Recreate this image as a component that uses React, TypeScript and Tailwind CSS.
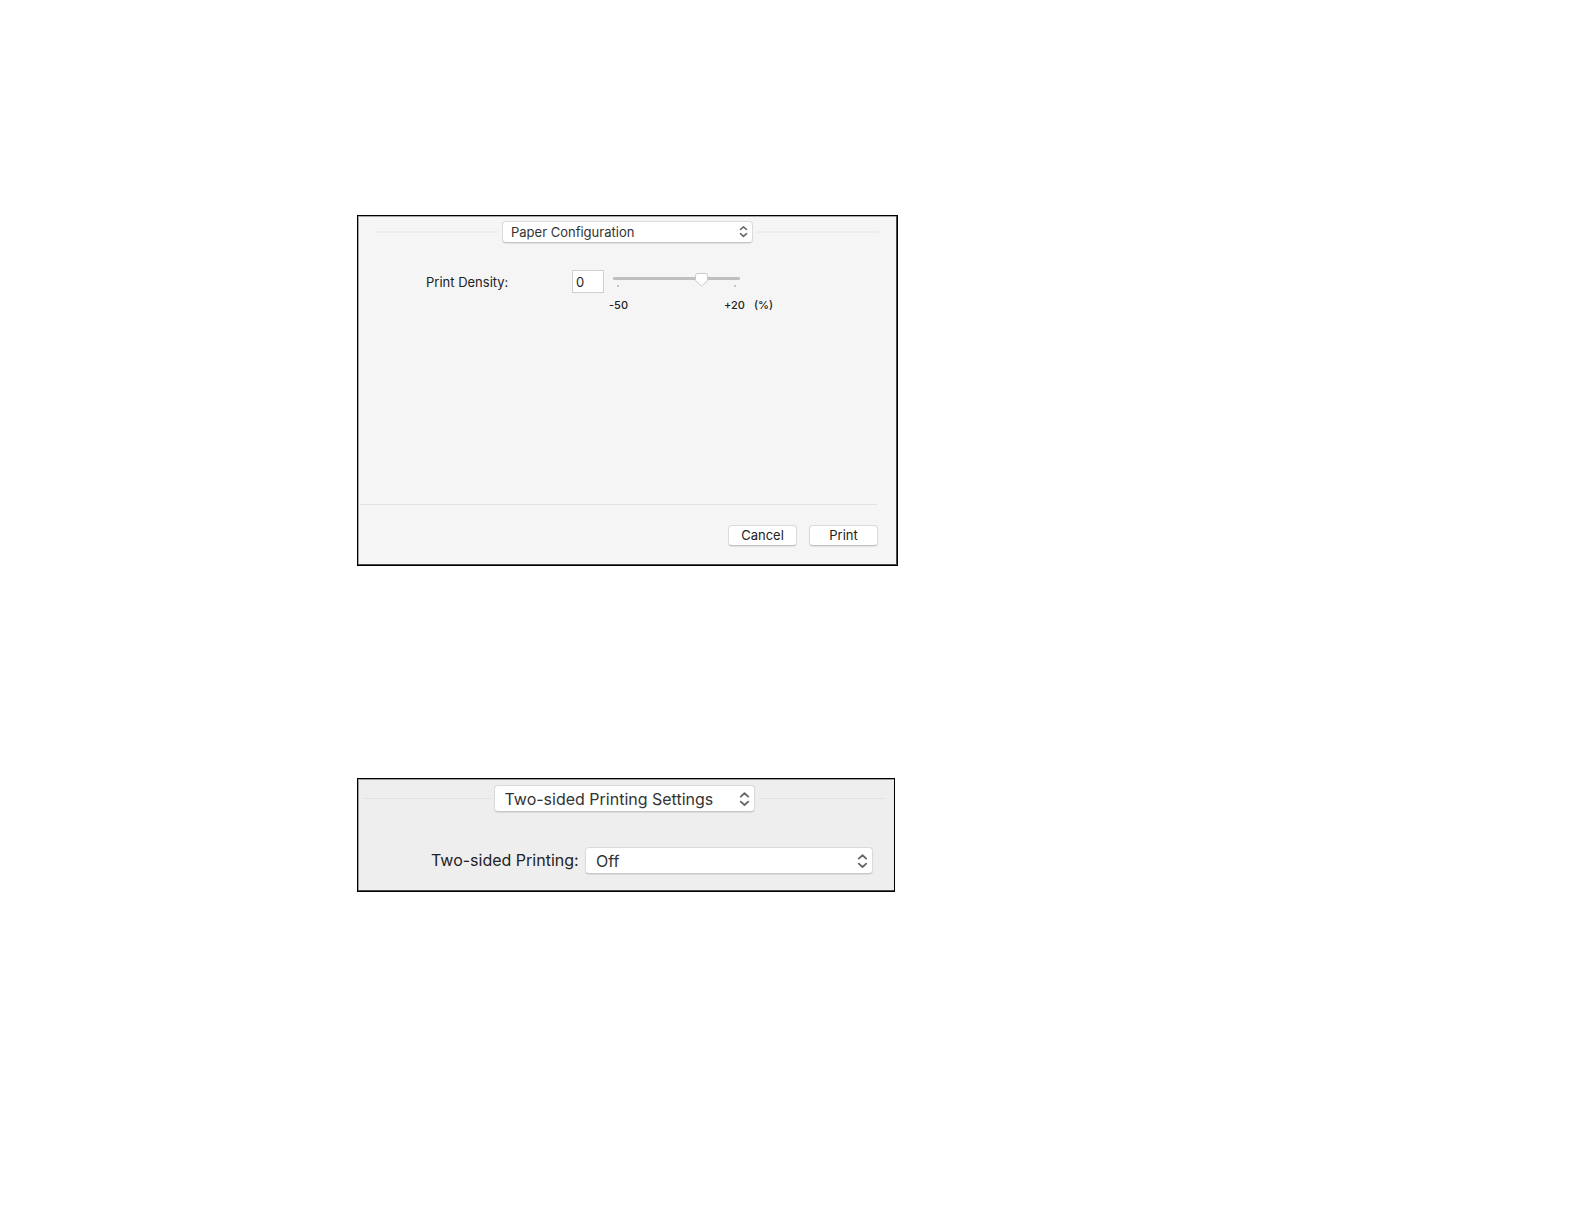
import { useState } from "react";
import type { ReactNode } from "react";

function Chevrons({ className }: { className: string }) {
  return (
    <svg
      viewBox="0 0 10 14"
      fill="none"
      stroke="#666666"
      strokeWidth="1.7"
      strokeLinecap="round"
      strokeLinejoin="round"
      className={`pointer-events-none absolute ${className}`}
      aria-hidden="true"
    >
      <path d="M1.6 4.8 5 1.8l3.4 3M1.6 9.4 5 12.4l3.4-3" />
    </svg>
  );
}

const popup =
  "w-full appearance-none rounded-[4px] border border-[#dadada] border-b-[#c6c6c6] bg-white text-[#333333] shadow-[0_1px_1px_rgba(0,0,0,0.08)] outline-none";

function Rule({ className }: { className: string }) {
  return <div className={`flex-1 ${className}`} />;
}

function PushButton({ children }: { children: ReactNode }) {
  return (
    <button
      type="button"
      className="h-[21px] w-[69px] rounded-[4px] border border-[#dadada] border-b-[#c2c2c2] bg-white text-[13px] leading-[19px] text-[#222222] shadow-[0_1px_1px_rgba(0,0,0,0.08)]"
    >
      {children}
    </button>
  );
}

function DensitySlider({ value, onChange }: { value: number; onChange: (v: number) => void }) {
  const x = 5 + ((value + 50) / 70) * 117;
  return (
    <div className="relative h-4 w-[128px]">
      <svg viewBox="0 0 128 16" className="block h-4 w-[128px]" aria-hidden="true">
        <rect x="0" y="4" width="127" height="3" rx="1" fill="#bfbfbf" />
        <rect x="4" y="12" width="2" height="2" fill="#c4c4c4" />
        <rect x="121" y="12" width="2" height="2" fill="#c4c4c4" />
        <path
          d={`M${x - 6} 2.5a2 2 0 0 1 2-2h8a2 2 0 0 1 2 2v5L${x} 13.2 ${x - 6} 7.5Z`}
          fill="#ffffff"
          stroke="#c8c8c8"
          strokeWidth="1"
        />
      </svg>
      <input
        type="range"
        min={-50}
        max={20}
        value={value}
        aria-label="Print Density"
        onChange={(e) => onChange(Number(e.target.value))}
        className="absolute inset-0 m-0 h-4 w-full cursor-default opacity-0"
      />
    </div>
  );
}

function PaperConfiguration() {
  const [density, setDensity] = useState(0);
  return (
    <section className="w-full max-w-[541px] border border-black bg-[#f5f5f5] shadow-[inset_-1px_-1px_0_#4a4a4a,inset_1px_1px_0_#a6a6a6]">
      <div className="flex items-center pt-[5px] pr-[18px] pl-[18px]">
        <Rule className="mr-1 h-[2px] bg-[#ececec]" />
        <div className="relative w-[251px]">
          <select
            aria-label="Options pane"
            className={`${popup} block h-[22px] pr-6 pl-2 text-[13px] leading-5`}
          >
            <option>Paper Configuration</option>
          </select>
          <Chevrons className="top-1 right-[5px] h-[13px] w-[9px]" />
        </div>
        <Rule className="ml-1 h-[2px] bg-[#ececec]" />
      </div>

      <div className="mt-[27px] flex pl-[68px]">
        <label htmlFor="density" className="w-[146px] pt-[2px] text-[13px] leading-5 text-[#222222]">
          Print Density:
        </label>
        <input
          id="density"
          type="text"
          value={density}
          onChange={(e) => setDensity(Number(e.target.value) || 0)}
          className="h-[23px] w-8 border border-[#cfcfcf] bg-white pl-[3px] text-[13px] text-[#222222] outline-none"
        />
        <div className="ml-[9px] pt-[3px]">
          <DensitySlider value={density} onChange={setDensity} />
          <div className="mt-2 -ml-1 flex text-[11px] leading-4 font-medium text-[#222222]">
            <span className="w-[115px]">-50</span>
            <span className="w-[30px]">+20</span>
            <span>(%)</span>
          </div>
        </div>
      </div>

      <div className="mt-[191px] mr-[20px] ml-[2px] h-px bg-[#e3e3e3]" />
      <div className="flex justify-end gap-3 pt-5 pr-[19px] pb-[19px]">
        <PushButton>Cancel</PushButton>
        <PushButton>Print</PushButton>
      </div>
    </section>
  );
}

function TwoSidedPrinting() {
  return (
    <section className="w-full max-w-[538px] border border-black bg-[#eeeeee] shadow-[inset_0_-1px_0_#4a4a4a,inset_1px_1px_0_#9c9c9c]">
      <div className="flex items-center pt-[6px] pr-[9px] pl-[6px]">
        <Rule className="mr-[2px] h-px bg-[#e0e0e0]" />
        <div className="relative mr-1 ml-px w-[261px]">
          <select
            aria-label="Options pane"
            className={`${popup} block h-[27px] pr-8 pl-[10px] text-base leading-6`}
          >
            <option>Two-sided Printing Settings</option>
          </select>
          <Chevrons className="top-[6px] right-[5px] h-4 w-[11px]" />
        </div>
        <Rule className="h-px bg-[#e0e0e0]" />
      </div>

      <div className="mt-[35px] flex items-center pr-[21px] pb-[17px] pl-[73px]">
        <label htmlFor="duplex" className="w-[154px] pb-[2px] text-base leading-6 text-[#222222]">
          Two-sided Printing:
        </label>
        <div className="relative flex-1">
          <select id="duplex" className={`${popup} block h-[27px] pr-8 pl-[10px] text-base leading-6`}>
            <option>Off</option>
            <option>Long-Edge binding</option>
            <option>Short-Edge binding</option>
          </select>
          <Chevrons className="top-[6px] right-[5px] h-4 w-[11px]" />
        </div>
      </div>
    </section>
  );
}

export default function App() {
  return (
    <main className="flex min-h-screen flex-col gap-[212px] bg-white pt-[215px] pl-[357px] font-['Inter','Liberation_Sans',sans-serif]">
      <PaperConfiguration />
      <TwoSidedPrinting />
    </main>
  );
}
